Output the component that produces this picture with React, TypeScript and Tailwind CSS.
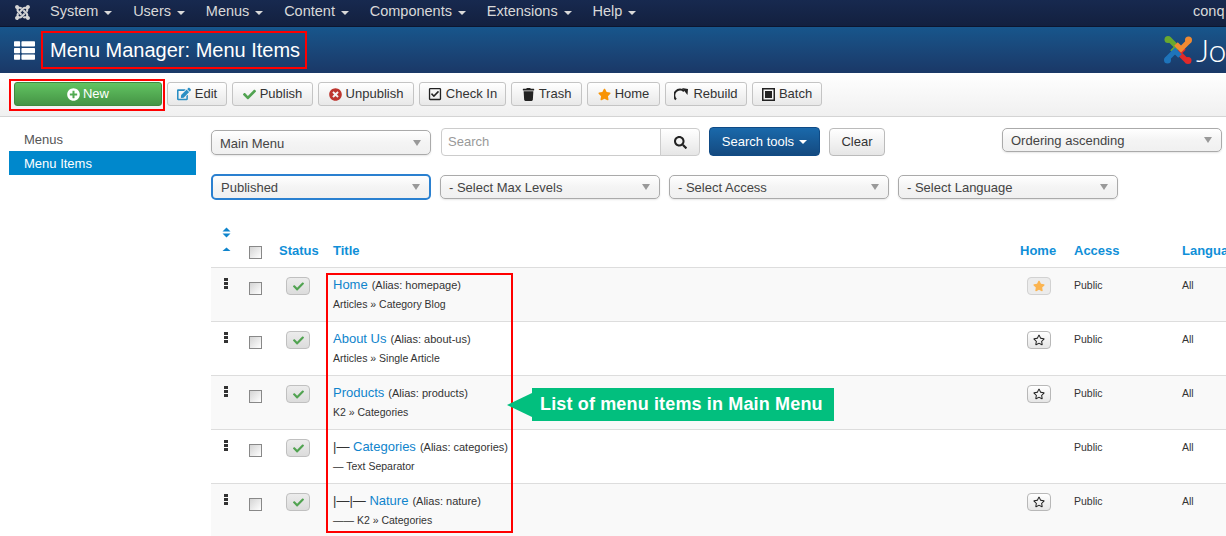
import React from 'react';
import { FaCheck, FaEdit, FaJoomla, FaPlusCircle, FaRegCheckSquare, FaRegStar, FaSearch, FaStar, FaThList, FaTimesCircle, FaTrash } from 'react-icons/fa';

const nav = ['System', 'Users', 'Menus', 'Content', 'Components', 'Extensions', 'Help'];

const rows = [
  { prefix: '', name: 'Home', alias: 'homepage', sub: 'Articles » Category Blog', home: 'on' },
  { prefix: '', name: 'About Us', alias: 'about-us', sub: 'Articles » Single Article', home: 'off' },
  { prefix: '', name: 'Products', alias: 'products', sub: 'K2 » Categories', home: 'off' },
  { prefix: '|— ', name: 'Categories', alias: 'categories', sub: '— Text Separator', home: 'none' },
  { prefix: '|—|— ', name: 'Nature', alias: 'nature', sub: '—— K2 » Categories', home: 'off' },
];

const cols = 'grid grid-cols-[30px_30px_55px_687px_54px_108px_100px] w-[1064px]';

const Caret = () => <span className="h-0 w-0 border-x-[4px] border-t-[6px] border-x-transparent border-t-[#999]" />;

const Select = ({ label, className }: { label: string; className: string }) => (
  <div className={`flex items-center justify-between rounded-[5px] bg-linear-to-b from-white via-[#f4f4f4] to-[#f0f0f0] pl-2 pr-[9px] text-[13px] text-[#444] ${className}`}>
    <span className="pt-[2px]">{label}</span>
    <Caret />
  </div>
);

const ToolBtn = ({ w, children }: { w: string; children: React.ReactNode }) => (
  <div className={`flex h-[24px] items-center justify-center gap-1 rounded-[3px] border border-[#c4c4c4] bg-linear-to-b from-white to-[#e8e8e8] text-[13px] text-[#333] ${w}`}>
    {children}
  </div>
);

const RebuildIcon = () => (
  <svg width="15" height="14" viewBox="0 0 15 14">
    <path d="M2 12.5 A5.5 5.5 0 0 1 10 4.2" fill="none" stroke="#222" strokeWidth="2" />
    <path d="M8 1 L14 2 L13.5 8 Z" fill="#222" />
  </svg>
);

const BatchIcon = () => (
  <svg width="13" height="13" viewBox="0 0 13 13">
    <rect x="0.75" y="0.75" width="11.5" height="11.5" fill="none" stroke="#222" strokeWidth="1.5" />
    <rect x="3" y="3" width="7" height="7" fill="#222" />
  </svg>
);

const JoomlaLogo = () => (
  <svg width="30" height="30" viewBox="0 0 30 30" fill="none" strokeWidth="5">
    <path d="M6 4 L14 12 L9 17" stroke="#6aa82e" />
    <circle cx="5" cy="4.5" r="3.5" fill="#6aa82e" />
    <path d="M24 26 L16 18 L21 13" stroke="#e02a2a" />
    <circle cx="25" cy="25.5" r="3.5" fill="#e02a2a" />
    <path d="M4 24 L12 16 L17 21" stroke="#1e74bb" />
    <circle cx="4.5" cy="25" r="3.5" fill="#1e74bb" />
    <path d="M26 6 L18 14 L13 9" stroke="#f08a32" />
    <circle cx="25.5" cy="5" r="3.5" fill="#f08a32" />
  </svg>
);

const Handle = () => (
  <div className="ml-[13px] flex w-[4px] flex-col gap-px">
    <span className="h-[3px] bg-[#333]" />
    <span className="h-[3px] bg-[#333]" />
    <span className="h-[3px] bg-[#333]" />
  </div>
);

const Checkbox = () => (
  <span className="ml-2 block h-[13px] w-[13px] border border-[#888] bg-linear-to-br from-[#d4d4d4] to-white" />
);

const App = () => {
  return (
    <div className="relative h-[536px] w-[1226px] overflow-hidden bg-white font-['Liberation_Sans',Arial,sans-serif] text-[#333]">
      {/* top bar */}
      <div className="flex h-[27px] items-center border-b border-[#0c1630] bg-linear-to-b from-[#17294f] to-[#13203f] pb-[2px] text-[14.5px] text-[#d9d9d9]">
        <FaJoomla className="ml-[14px] mr-[19px] h-[17px] w-[17px] text-[#d5d5d5]" />
        {nav.map((item) => (
          <span key={item} className="mr-[20.8px] flex items-center gap-[6px]">
            {item}
            <span className="mt-px h-0 w-0 border-x-[4px] border-t-[4px] border-x-transparent border-t-[#d9d9d9]" />
          </span>
        ))}
        <span className="ml-auto w-[33px] whitespace-nowrap">conq</span>
      </div>

      {/* title bar */}
      <div className="flex h-[46px] items-center bg-linear-to-b from-[#17568c] to-[#1a3867]">
        <FaThList className="ml-[14px] h-[21px] w-[21px] text-white" />
        <h1 className="ml-[15px] text-[20px] leading-none text-white">Menu Manager: Menu Items</h1>
        <div className="ml-auto flex w-[63px] shrink-0 items-center gap-[3px] overflow-hidden">
          <div className="shrink-0"><JoomlaLogo /></div>
          <span className="font-['Lato'] text-[32px] font-light leading-none text-white">Joomla!</span>
        </div>
      </div>

      {/* toolbar */}
      <div className="flex h-[44px] items-center gap-[5px] border-b border-[#d4d4d4] bg-linear-to-b from-white to-[#f0f0f0] pb-[1px] pl-[14px]">
        <div className="flex h-[24px] w-[148px] items-center justify-center gap-[3px] rounded-[3px] border border-[#3f8a3f] bg-linear-to-b from-[#62c462] to-[#459445] text-[13px] text-white">
          <FaPlusCircle className="h-[13px] w-[13px]" />
          New
        </div>
        <ToolBtn w="w-[60px]"><FaEdit className="h-[14px] w-[14px] text-[#2a8fc4]" />Edit</ToolBtn>
        <ToolBtn w="w-[81px]"><FaCheck className="h-[13px] w-[13px] text-[#51a351]" />Publish</ToolBtn>
        <ToolBtn w="w-[96px]"><FaTimesCircle className="h-[13px] w-[13px] text-[#bd362f]" />Unpublish</ToolBtn>
        <ToolBtn w="w-[87px]"><FaRegCheckSquare className="h-[14px] w-[14px] text-[#222]" />Check In</ToolBtn>
        <ToolBtn w="w-[71px]"><FaTrash className="h-[13px] w-[13px] text-[#222]" />Trash</ToolBtn>
        <ToolBtn w="w-[73px]"><FaStar className="h-[13px] w-[13px] text-[#f89406]" />Home</ToolBtn>
        <ToolBtn w="w-[82px]"><RebuildIcon />Rebuild</ToolBtn>
        <ToolBtn w="w-[70px]"><BatchIcon />Batch</ToolBtn>
      </div>

      <div className="flex">
        {/* sidebar */}
        <div className="ml-[9px] mr-[15px] w-[187px] shrink-0 pt-[10px] text-[13px]">
          <div className="flex h-[24px] items-center pl-[15px] pt-[2px] text-[#555]">Menus</div>
          <div className="flex h-[24px] items-center bg-[#0088cc] pl-[15px] pt-[2px] text-white">Menu Items</div>
        </div>

        <div className="min-w-0 flex-1 pt-[10px]">
          {/* filter row 1 */}
          <div className="flex h-[29px] items-start">
            <Select label="Main Menu" className="mt-[3px] h-[25px] w-[220px] border border-[#aaa] shadow-[0_1px_2px_rgba(0,0,0,0.1)]" />
            <div className="ml-[10px] mt-px flex h-[28px]">
              <div className="flex w-[220px] items-center rounded-l-[4px] border border-[#ccc] pl-[6px] text-[13px] text-[#999]">Search</div>
              <div className="-ml-px flex w-[40px] items-center justify-center rounded-r-[4px] border border-[#ccc] bg-linear-to-b from-white to-[#e6e6e6]">
                <FaSearch className="h-[13px] w-[13px] text-[#222]" />
              </div>
            </div>
            <div className="ml-[9px] flex h-[29px] w-[111px] items-center justify-center gap-[5px] rounded-[4px] border border-[#0f4a85] bg-linear-to-b from-[#1a69ab] to-[#144a80] text-[13px] text-white">
              Search tools
              <span className="mt-px h-0 w-0 border-x-[4px] border-t-[4px] border-x-transparent border-t-white" />
            </div>
            <div className="ml-[9px] mt-px flex h-[28px] w-[56px] items-center justify-center rounded-[4px] border border-[#bbb] bg-linear-to-b from-white to-[#e6e6e6] text-[13px] text-[#333]">Clear</div>
            <Select label="Ordering ascending" className="ml-[117px] mt-px h-[24px] w-[220px] border border-[#aaa] shadow-[0_1px_2px_rgba(0,0,0,0.1)]" />
          </div>

          {/* filter row 2 */}
          <div className="mt-[18px] flex h-[26px] items-center">
            <Select label="Published" className="h-[26px] w-[220px] border-2 border-[#2a80d0]" />
            <Select label="- Select Max Levels" className="ml-[9px] h-[24px] w-[220px] border border-[#aaa] shadow-[0_1px_2px_rgba(0,0,0,0.1)]" />
            <Select label="- Select Access" className="ml-[9px] h-[24px] w-[220px] border border-[#aaa] shadow-[0_1px_2px_rgba(0,0,0,0.1)]" />
            <Select label="- Select Language" className="ml-[9px] h-[24px] w-[220px] border border-[#aaa] shadow-[0_1px_2px_rgba(0,0,0,0.1)]" />
          </div>

          {/* table head */}
          <div className={`${cols} h-[67px] items-end pb-[7px] text-[13px] font-bold text-[#0f8fd8]`}>
            <div className="ml-[11px] flex flex-col items-start">
              <svg width="9" height="24" viewBox="0 0 9 24" fill="#0f84cc">
                <path d="M0.5 4.5 L4.5 0.5 L8.5 4.5 Z" />
                <path d="M0.5 6.5 L8.5 6.5 L4.5 10.5 Z" />
                <path d="M0.5 24 L4.5 20.5 L8.5 24 Z" />
              </svg>
              <span className="h-[9px]" />
            </div>
            <div className="pb-px"><Checkbox /></div>
            <div className="pl-2">Status</div>
            <div className="pl-[7px]">Title</div>
            <div className="pl-[7px]">Home</div>
            <div className="pl-[7px]">Access</div>
            <div className="whitespace-nowrap pl-[7px]">Language</div>
          </div>

          {/* table rows */}
          {rows.map((row, i) => (
            <div key={row.name} className={`${cols} h-[54px] border-t border-[#ddd] ${i % 2 === 0 ? 'bg-[#f9f9f9]' : 'bg-white'}`}>
              <div className="pt-[10px]"><Handle /></div>
              <div className="pt-[14px]"><Checkbox /></div>
              <div className="pl-[15px] pt-[9px]">
                <div className="flex h-[18px] w-[24px] items-center justify-center rounded-[4px] border border-[#c0c0c0] bg-linear-to-b from-[#ececec] to-[#dcdcdc]">
                  <FaCheck className="h-[11px] w-[11px] text-[#51a351]" />
                </div>
              </div>
              <div className="pl-[7px] pt-[7px]">
                <div className="flex h-[17px] items-baseline whitespace-pre text-[11px]">
                  {row.prefix && <span className="text-[13px]">{row.prefix}</span>}
                  <span className="mr-[4px] text-[13px] text-[#0f84cc]">{row.name}</span>
                  <span>(Alias: {row.alias})</span>
                </div>
                <div className="mt-[5px] text-[10.5px] leading-[15px]">{row.sub}</div>
              </div>
              <div className="pl-[14px] pt-[9px]">
                {row.home === 'on' && (
                  <div className="flex h-[18px] w-[24px] items-center justify-center rounded-[4px] border border-[#d2d2d2] bg-[#ececec]">
                    <FaStar className="h-[12px] w-[12px] text-[#fbb450]" />
                  </div>
                )}
                {row.home === 'off' && (
                  <div className="flex h-[18px] w-[24px] items-center justify-center rounded-[4px] border border-[#b8b8b8] bg-linear-to-b from-white to-[#e6e6e6]">
                    <FaRegStar className="h-[12px] w-[12px] text-[#222]" />
                  </div>
                )}
              </div>
              <div className="pl-[7px] pt-[10px] text-[10.5px]">Public</div>
              <div className="pl-[7px] pt-[10px] text-[10.5px]">All</div>
            </div>
          ))}
        </div>
      </div>

      {/* annotations */}
      <div className="absolute left-[41px] top-[31px] h-[38px] w-[266px] border-2 border-[#f00]" />
      <div className="absolute left-[9px] top-[79px] h-[32px] w-[156px] border-2 border-[#f00]" />
      <div className="absolute left-[326px] top-[273px] h-[260px] w-[187px] border-2 border-[#f00]" />
      <div className="absolute left-[507px] top-[388px] flex h-[33px] items-center">
        <span className="h-0 w-0 border-y-[12px] border-r-[25px] border-y-transparent border-r-[#02bf7e]" />
        <div className="flex h-[33px] w-[302px] items-center bg-[#02bf7e] pl-[8px] text-[18px] font-bold tracking-[0.15px] text-white">List of menu items in Main Menu</div>
      </div>
    </div>
  );
};

export default App;
